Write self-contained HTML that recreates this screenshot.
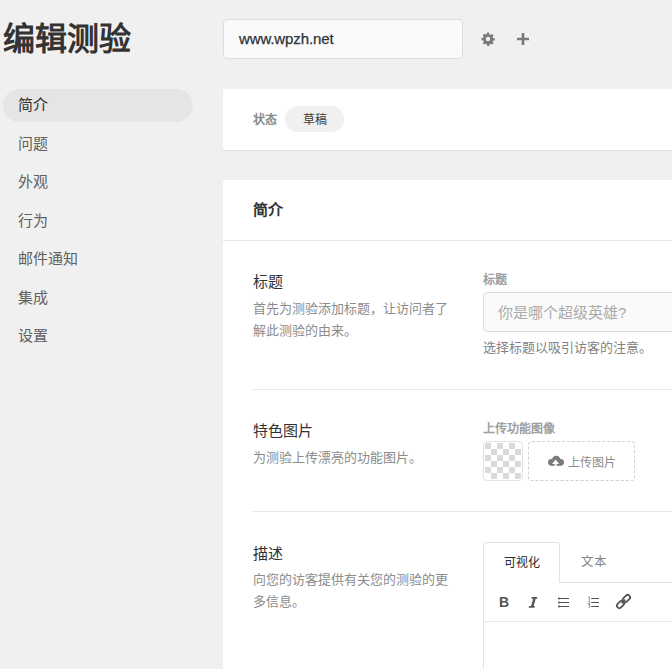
<!DOCTYPE html>
<html lang="zh-CN"><head><meta charset="utf-8">
<style>
*{box-sizing:border-box;margin:0;padding:0}
html,body{width:672px;height:669px;overflow:hidden;background:#f0f0f0;font-family:"Liberation Sans",sans-serif;color:#32373c}
.abs{position:absolute}
#title{left:3px;top:17px;font-size:32px;font-weight:900;color:#333;white-space:nowrap;line-height:44px}
.pill{left:3px;top:89px;width:190px;height:33px;border-radius:17px;background:#e5e5e5}
.nav{left:18px;font-size:15px;color:#606060;line-height:20px;white-space:nowrap}
#url{left:223px;top:19px;width:240px;height:40px;border:1px solid #dcdcdc;border-radius:4px;background:#fafafa}
#urltxt{left:239px;top:29px;font-size:15px;color:#2c3338;line-height:20px;-webkit-text-stroke:0.25px #2c3338;letter-spacing:-0.12px}
.card{background:#fff;border-radius:2px;box-shadow:0 1px 1px rgba(0,0,0,.06)}
#card1{left:223px;top:89px;width:470px;height:61px}
#card2{left:223px;top:180px;width:470px;height:520px}
.lbl{font-size:12px;color:#a0a0a0;white-space:nowrap;line-height:16px;font-weight:600}
.h{font-size:15px;color:#333;white-space:nowrap;line-height:20px}
.d{font-size:13px;color:#8c8c8c;white-space:nowrap;line-height:22px}
.hr{height:1px;background:#e6e6e6}
</style></head><body>
<div class="abs" id="title">编辑测验</div>
<div class="abs pill"></div>
<div class="abs nav" style="top:95px;color:#333">简介</div>
<div class="abs nav" style="top:134px">问题</div>
<div class="abs nav" style="top:172px">外观</div>
<div class="abs nav" style="top:211px">行为</div>
<div class="abs nav" style="top:249px">邮件通知</div>
<div class="abs nav" style="top:288px">集成</div>
<div class="abs nav" style="top:326px">设置</div>

<div class="abs" id="url"></div>
<div class="abs" id="urltxt">www.wpzh.net</div>
<svg class="abs" style="left:480px;top:31px" width="16" height="16" viewBox="0 0 16 16">
<path fill="#7a7a7a" d="M8 1.5l1.2.2.4 1.7 1 .5 1.5-.9 1.4 1.4-.9 1.5.5 1 1.7.4v2l-1.7.4-.5 1 .9 1.5-1.4 1.4-1.5-.9-1 .5-.4 1.7h-2l-.4-1.7-1-.5-1.5.9-1.4-1.4.9-1.5-.5-1L1.5 9V7l1.7-.4.5-1-.9-1.5 1.4-1.4 1.5.9 1-.5.4-1.7zM8 5.8A2.2 2.2 0 1 0 8 10.2 2.2 2.2 0 1 0 8 5.8z"/>
</svg>
<svg class="abs" style="left:517px;top:33px" width="12" height="12" viewBox="0 0 12 12">
<path stroke="#7a7a7a" stroke-width="2.6" d="M0 6H12M6 0V12"/>
</svg>

<div class="abs card" id="card1"></div>
<div class="abs lbl" style="left:253px;top:112px;color:#8c8c8c">状态</div>
<div class="abs" style="left:285px;top:106px;width:59px;height:26px;border-radius:13px;background:#f0f0f0"></div>
<div class="abs" style="left:303px;top:112px;font-size:12px;color:#3c3c3c;line-height:16px">草稿</div>

<div class="abs card" id="card2"></div>
<div class="abs h" style="left:253px;top:200px;font-weight:bold">简介</div>
<div class="abs hr" style="left:223px;top:240px;width:449px"></div>

<div class="abs h" style="left:253px;top:272px">标题</div>
<div class="abs d" style="left:253px;top:298px">首先为测验添加标题，让访问者了</div>
<div class="abs d" style="left:253px;top:320px">解此测验的由来。</div>
<div class="abs lbl" style="left:483px;top:272px">标题</div>
<div class="abs" style="left:483px;top:292px;width:220px;height:40px;border:1px solid #dcdcdc;border-radius:4px;background:#fafafa"></div>
<div class="abs" style="left:498px;top:303px;font-size:15px;color:#aaa;line-height:20px;white-space:nowrap">你是哪个超级英雄?</div>
<div class="abs d" style="left:483px;top:337px;color:#838383">选择标题以吸引访客的注意。</div>
<div class="abs hr" style="left:253px;top:389px;width:419px"></div>

<div class="abs h" style="left:253px;top:421px">特色图片</div>
<div class="abs d" style="left:253px;top:447px">为测验上传漂亮的功能图片。</div>
<div class="abs lbl" style="left:483px;top:421px">上传功能图像</div>
<div class="abs" style="left:483px;top:441px;width:40px;height:40px;border:1px solid #e2e2e2;border-radius:4px;padding:1px;background:conic-gradient(#fff 0 90deg,#dadada 90deg 180deg,#fff 180deg 270deg,#dadada 270deg) 0 0/12px 12px;background-origin:content-box;background-clip:content-box"></div>
<div class="abs" style="left:528px;top:441px;width:107px;height:40px;border:1px dashed #d0d0d0;border-radius:4px"></div>
<svg class="abs" style="left:548px;top:455px" width="16" height="12" viewBox="0 0 16 12">
<g fill="#7a7a7a"><circle cx="3.4" cy="7.3" r="3.4"/><circle cx="8.2" cy="5" r="4.2"/><circle cx="12.6" cy="7.3" r="3.4"/><rect x="3.4" y="5" width="9.2" height="5.7"/></g>
<path fill="#fff" d="M7.6 4.6L11.2 8.9H8.5V11H6.7V8.9H4z"/>
</svg>
<div class="abs d" style="left:568px;top:452px;font-size:12px">上传图片</div>
<div class="abs hr" style="left:253px;top:511px;width:419px"></div>

<div class="abs h" style="left:253px;top:544px">描述</div>
<div class="abs d" style="left:253px;top:569px">向您的访客提供有关您的测验的更</div>
<div class="abs d" style="left:253px;top:591px">多信息。</div>

<!-- editor -->
<div class="abs" style="left:483px;top:582px;width:200px;height:100px;border:1px solid #e2e2e2;background:#fff"></div>
<div class="abs hr" style="left:484px;top:621px;width:190px;background:#e6e6e6"></div>
<div class="abs" style="left:483px;top:542px;width:77px;height:41px;border:1px solid #e2e2e2;border-bottom:none;border-radius:4px 4px 0 0;background:#fff"></div>
<div class="abs" style="left:504px;top:554px;font-size:12px;color:#2a2a2a;line-height:18px;white-space:nowrap">可视化</div>
<div class="abs" style="left:581px;top:553px;font-size:12.5px;color:#858585;line-height:18px;white-space:nowrap">文本</div>
<div class="abs" style="left:499px;top:593px;font-size:14px;font-weight:bold;color:#555;line-height:18px">B</div>
<svg class="abs" style="left:528px;top:595px" width="10" height="14" viewBox="0 0 10 14"><path fill="#555" d="M3.6 1.9H9.2V3.7H7.7L5.6 10.9H6.6V12.7H0.9V10.9H3.0L5.3 3.7H3.6z"/></svg>
<svg class="abs" style="left:556px;top:596px" width="14" height="12" viewBox="0 0 14 12">
<g fill="#555"><circle cx="3" cy="2.5" r="1.1"/><circle cx="3" cy="6.5" r="1.1"/><circle cx="3" cy="10.5" r="1.1"/></g>
<g stroke="#555" stroke-width="1.1"><path d="M4 2.5H13M4 6.5H13M4 10.5H13"/></g>
</svg>
<svg class="abs" style="left:586px;top:596px" width="14" height="12" viewBox="0 0 14 12">
<g fill="none" stroke="#777" stroke-width="0.8"><path d="M3.3 0.6V4.2M2.5 1.2L3.3 0.6"/><path d="M2.4 5.3Q3.2 4.6 3.9 5.2Q4.1 5.9 2.4 7.6H4.1"/><path d="M2.4 8.6H4L3.1 9.7Q4.2 9.8 4 10.8Q3.5 11.6 2.4 11.1"/></g>
<g stroke="#555" stroke-width="1.1"><path d="M5.2 2.5H13M5.2 6.5H13M5.2 10.5H13"/></g>
</svg>
<svg class="abs" style="left:614px;top:592px" width="19" height="19" viewBox="-10 -10 20 20">
<g transform="rotate(-45)" fill="none" stroke="#555" stroke-width="1.9">
<rect x="-8.7" y="-2.5" width="8.8" height="5" rx="2.5"/>
<rect x="-0.1" y="-2.5" width="8.8" height="5" rx="2.5"/>
<path d="M-2.6 0H2.6"/>
</g>
</svg>
</body></html>
